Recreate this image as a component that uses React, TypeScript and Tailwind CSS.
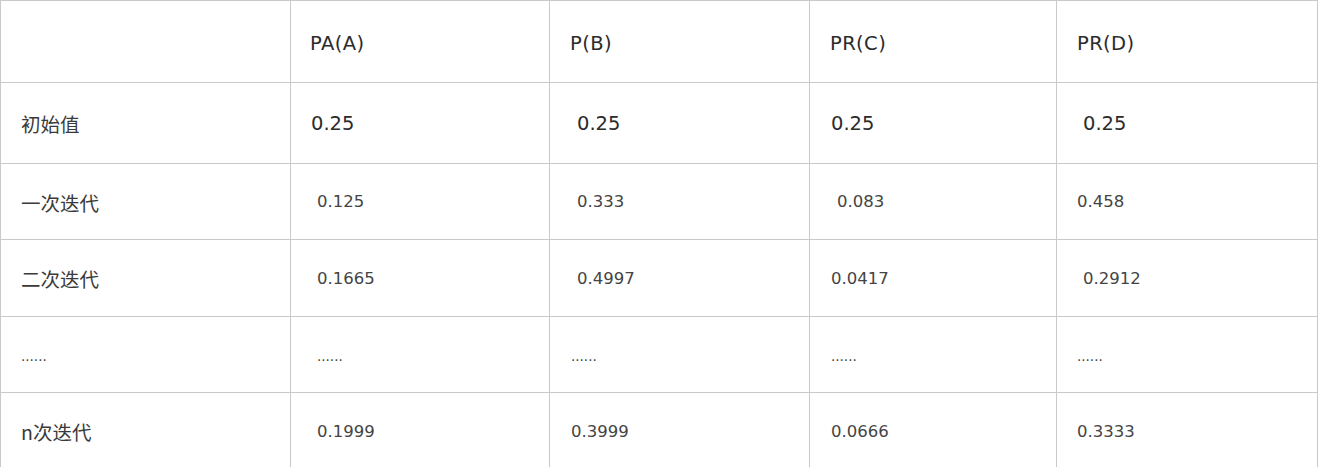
import React from "react";

type Cell = { t: string; pl: string; kind: "head" | "big" | "small" | "cjk" | "dots" };

const latin = "font-['DejaVu_Sans','Noto_Sans_CJK_SC',sans-serif]";

const rows: { h: string; pt: string; cells: Cell[] }[] = [
  {
    h: "h-[82px]",
    pt: "pt-[5px]",
    cells: [
      { t: "", pl: "pl-[20px]", kind: "cjk" },
      { t: "PA(A)", pl: "pl-[19px]", kind: "head" },
      { t: "P(B)", pl: "pl-[20px]", kind: "head" },
      { t: "PR(C)", pl: "pl-[20px]", kind: "head" },
      { t: "PR(D)", pl: "pl-[20px]", kind: "head" },
    ],
  },
  {
    h: "h-[81px]",
    pt: "pt-[2px]",
    cells: [
      { t: "初始值", pl: "pl-[20px]", kind: "cjk" },
      { t: "0.25", pl: "pl-[20px]", kind: "big" },
      { t: "0.25", pl: "pl-[27px]", kind: "big" },
      { t: "0.25", pl: "pl-[21px]", kind: "big" },
      { t: "0.25", pl: "pl-[26px]", kind: "big" },
    ],
  },
  {
    h: "h-[76px]",
    pt: "pt-[2px]",
    cells: [
      { t: "一次迭代", pl: "pl-[20px]", kind: "cjk" },
      { t: "0.125", pl: "pl-[26px]", kind: "small" },
      { t: "0.333", pl: "pl-[27px]", kind: "small" },
      { t: "0.083", pl: "pl-[27px]", kind: "small" },
      { t: "0.458", pl: "pl-[20px]", kind: "small" },
    ],
  },
  {
    h: "h-[77px]",
    pt: "pt-[2px]",
    cells: [
      { t: "二次迭代", pl: "pl-[20px]", kind: "cjk" },
      { t: "0.1665", pl: "pl-[26px]", kind: "small" },
      { t: "0.4997", pl: "pl-[27px]", kind: "small" },
      { t: "0.0417", pl: "pl-[21px]", kind: "small" },
      { t: "0.2912", pl: "pl-[26px]", kind: "small" },
    ],
  },
  {
    h: "h-[76px]",
    pt: "pt-[4px]",
    cells: [
      { t: "......", pl: "pl-[20px]", kind: "dots" },
      { t: "......", pl: "pl-[26px]", kind: "dots" },
      { t: "......", pl: "pl-[21px]", kind: "dots" },
      { t: "......", pl: "pl-[21px]", kind: "dots" },
      { t: "......", pl: "pl-[20px]", kind: "dots" },
    ],
  },
  {
    h: "h-[76px]",
    pt: "pt-[3px]",
    cells: [
      { t: "n次迭代", pl: "pl-[20px]", kind: "cjk" },
      { t: "0.1999", pl: "pl-[26px]", kind: "small" },
      { t: "0.3999", pl: "pl-[21px]", kind: "small" },
      { t: "0.0666", pl: "pl-[21px]", kind: "small" },
      { t: "0.3333", pl: "pl-[20px]", kind: "small" },
    ],
  },
];

const kindCls: Record<Cell["kind"], string> = {
  head: "text-[19.5px] text-[#2b2b2b] tracking-[0.4px]",
  big: "text-[19.5px] text-[#2b2b2b]",
  small: "text-[16.5px] text-[#444444]",
  dots: "text-[13.5px] text-[#444444]",
  cjk: "text-[19.5px] text-[#3a3a3a] font-['Noto_Sans_CJK_SC',sans-serif]",
};

const widths = ["w-[290px]", "w-[259px]", "w-[260px]", "w-[247px]", "w-[261px]"];

export default function App() {
  return (
    <div className="w-[1319px] h-[467px] overflow-hidden bg-white">
      <div className={`inline-flex flex-col border-l border-t border-[#c9c9c9] ${latin}`}>
        {rows.map((r, ri) => (
          <div key={ri} className={`flex ${r.h}`}>
            {r.cells.map((c, ci) => (
              <div
                key={ci}
                className={`${widths[ci]} ${c.pl} ${r.pt} flex items-center border-r border-b border-[#c9c9c9] ${kindCls[c.kind]}`}
              >
                {c.t}
              </div>
            ))}
          </div>
        ))}
      </div>
    </div>
  );
}
